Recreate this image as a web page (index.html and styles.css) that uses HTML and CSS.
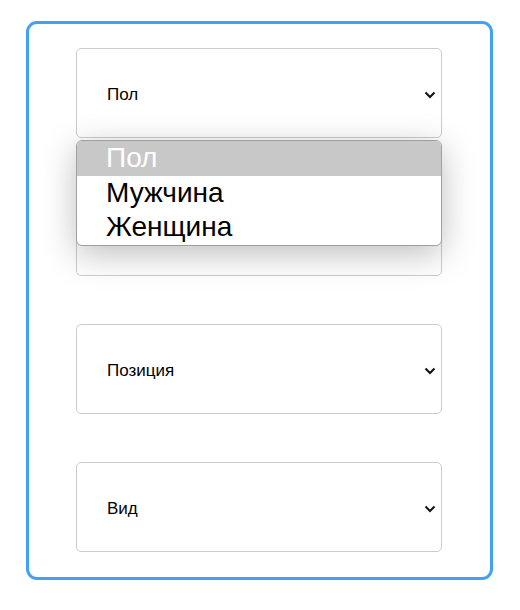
FILE: index.html
```html
<!DOCTYPE html>
<html lang="ru">
<head>
<meta charset="utf-8">
<title>Форма</title>
<link rel="stylesheet" href="styles.css">
</head>
<body>
<div class="card">
  <div class="field">
    <div class="select"><span class="label">Пол</span>
      <svg class="chev" width="12" height="8" viewBox="0 0 12 8"><path d="M1.5 1.5 L6 6 L10.5 1.5" fill="none" stroke="#111" stroke-width="2"/></svg>
    </div>
    <div class="popup">
      <div class="opt sel">Пол</div>
      <div class="opt">Мужчина</div>
      <div class="opt">Женщина</div>
    </div>
  </div>
  <div class="field">
    <div class="select"><span class="label"></span>
      <svg class="chev" width="12" height="8" viewBox="0 0 12 8"><path d="M1.5 1.5 L6 6 L10.5 1.5" fill="none" stroke="#111" stroke-width="2"/></svg>
    </div>
  </div>
  <div class="field">
    <div class="select"><span class="label">Позиция</span>
      <svg class="chev" width="12" height="8" viewBox="0 0 12 8"><path d="M1.5 1.5 L6 6 L10.5 1.5" fill="none" stroke="#111" stroke-width="2"/></svg>
    </div>
  </div>
  <div class="field">
    <div class="select"><span class="label">Вид</span>
      <svg class="chev" width="12" height="8" viewBox="0 0 12 8"><path d="M1.5 1.5 L6 6 L10.5 1.5" fill="none" stroke="#111" stroke-width="2"/></svg>
    </div>
  </div>
</div>
</body>
</html>
```
FILE: styles.css
```css
html, body {
  margin: 0;
  padding: 0;
  background: #fff;
  font-family: "Liberation Sans", Arial, sans-serif;
}
body {
  padding: 21px 27px 0 26px;
}
.card {
  box-sizing: border-box;
  width: 467px;
  height: 559px;
  border: 3px solid #42a0f5;
  border-radius: 11px;
  display: flex;
  flex-direction: column;
  align-items: flex-start;
  padding-left: 47px;
}
.field {
  position: relative;
  margin: 24px 0;
  width: 366px;
}
.select {
  box-sizing: border-box;
  height: 90px;
  border: 1px solid #cccccc;
  border-radius: 5px;
  display: flex;
  align-items: center;
  justify-content: space-between;
  padding: 4px 5px 0 30px;
  font-size: 17px;
  color: #000;
  background: #fff;
}
.chev {
  display: block;
}
.popup {
  position: absolute;
  z-index: 2;
  left: 0;
  top: 92px;
  width: 366px;
  box-sizing: border-box;
  border: 1px solid #a0a0a0;
  border-radius: 6px;
  background: #fff;
  overflow: hidden;
  box-shadow: 0 8px 34px rgba(0, 0, 0, 0.26);
}
.opt {
  height: 34.5px;
  line-height: 34px;
  padding-left: 29px;
  font-size: 28px;
  color: #000;
}
.opt.sel {
  background: #c8c8c8;
  color: #fff;
}
```
